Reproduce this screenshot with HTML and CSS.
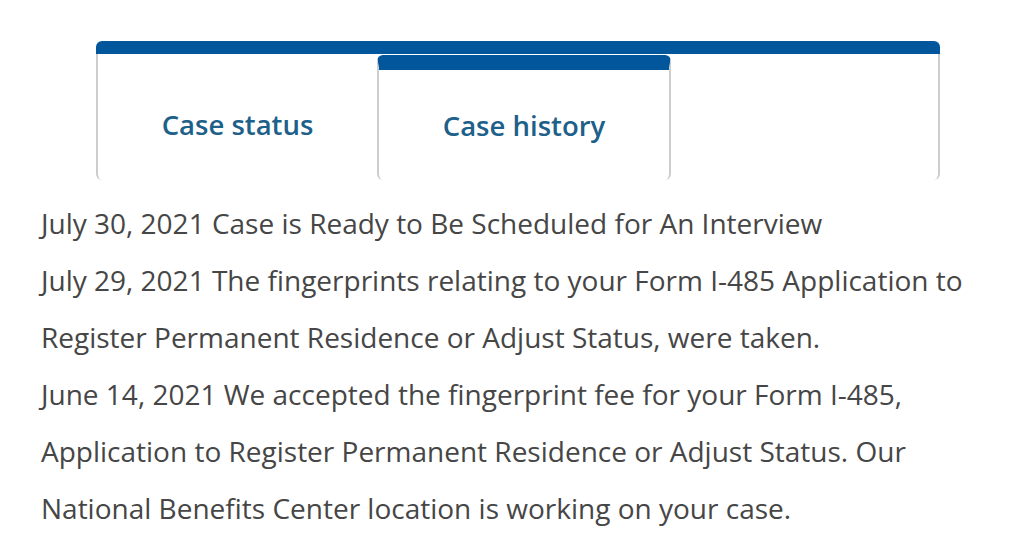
FILE: index.html
```html
<!DOCTYPE html>
<html lang="en">
<head>
    <meta charset="UTF-8">
    <title>Case history</title>
    <link rel="stylesheet" href="styles.css">
</head>
<body>
    <div class="page">
        <div class="tabs">
            <div class="tab tab-first">Case status</div>
            <div class="tab tab-active">Case history</div>
            <div class="tab tab-last"></div>
        </div>

        <div class="history">
            <p>July 30, 2021 Case is Ready to Be Scheduled for An Interview</p>
            <p>July 29, 2021 The fingerprints relating to your Form I-485 Application to Register Permanent Residence or Adjust Status, were taken.</p>
            <p>June 14, 2021 We accepted the fingerprint fee for your Form I-485, Application to Register Permanent Residence or Adjust Status. Our National Benefits Center location is working on your case.</p>
        </div>
    </div>
</body>
</html>
```

FILE: styles.css
```css
body {
    margin: 0;
    background: #fff;
    font-family: "Open Sans", sans-serif;
}
.page {
    padding: 41px 0 0 41px;
    width: 940px;
}
.tabs {
    display: flex;
    margin-left: 55px;
    width: 844px;
    border-top: 13px solid #02569b;
    border-radius: 6px 6px 0 0;
}
.tab {
    height: 126px;
    padding-top: 15px;
    display: flex;
    align-items: center;
    justify-content: center;
    font-size: 27.5px;
    font-weight: 600;
    color: #1d6089;
    box-sizing: border-box;
}
.tab-first {
    width: 281px;
    border-left: 2px solid #cdcdcd;
    border-radius: 0 0 0 6px;
}
.tab-active {
    width: 294px;
    padding-top: 0;
    border-top: 15px solid #02569b;
    border-left: 2px solid #cdcdcd;
    border-right: 2px solid #cdcdcd;
    border-radius: 6px;
    margin-top: 1px;
    height: 125px;
}
.tab-last {
    flex: 1;
    border-right: 2px solid #cdcdcd;
    border-radius: 0 0 6px 0;
}
.history {
    margin-top: 15px;
    color: #464646;
    font-size: 28px;
    line-height: 57px;
}
.history p {
    margin: 0;
}
```
